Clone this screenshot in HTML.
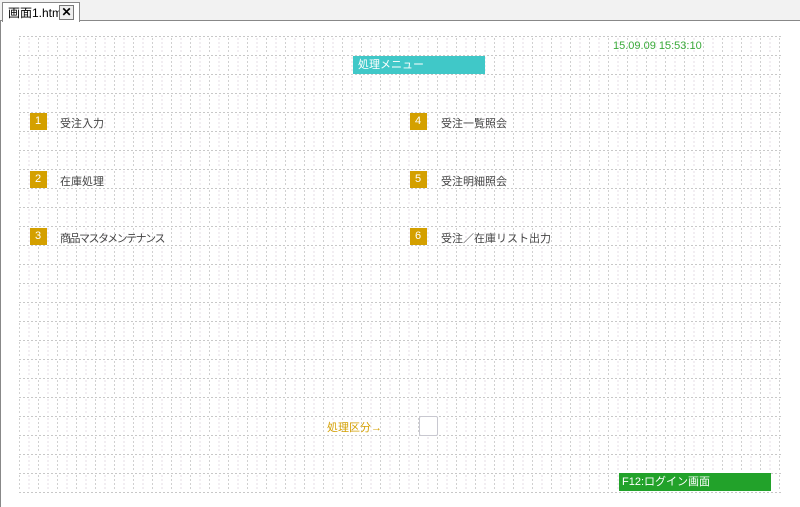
<!DOCTYPE html>
<html><head><meta charset="utf-8"><style>
body{margin:0;width:800px;height:507px;overflow:hidden;background:#fff;font-family:"Liberation Sans","Noto Sans CJK JP",sans-serif;position:relative}
.a{position:absolute}
.t{font-size:11px;color:#444;white-space:nowrap}
.b{position:absolute;width:17px;height:17px;background:#d4a000;color:#fff;font-size:11px;line-height:17px;text-indent:5px}
</style></head><body>
<div class="a" style="left:0;top:0;width:800px;height:20px;background:#f2f2f2;border-bottom:1px solid #888"></div>
<div class="a" style="left:2px;top:2px;width:76px;height:19px;background:#fff;border:1px solid #888;border-bottom:none"></div>
<div class="a t" style="left:8px;top:4px;font-size:12px;color:#000">画面1.htm</div>
<div class="a" style="left:59px;top:5px;width:13px;height:13px;border:1px solid #777;background:#eee;font-size:12px;line-height:13px;text-align:center;font-weight:bold">✕</div>
<div class="a" style="left:0;top:20px;width:1px;height:487px;background:#888"></div>
<svg class="a" style="left:0;top:0" width="800" height="507">
<defs><pattern id="p" x="19" y="36" width="19" height="19" patternUnits="userSpaceOnUse">
<path d="M0.5 2V4M0.5 6V8M0.5 10V12M0.5 14V16" stroke="#d0d0d0"/>
<path d="M10 2V4M10 6V8M10 10V12M10 14V16" stroke="#e6dce6"/>
</pattern></defs>
<rect x="19" y="36" width="762" height="457" fill="url(#p)"/>
<g stroke="#c8c8c8" stroke-width="1" stroke-dasharray="2,2">
<path d="M19 36.5H781M19 55.5H781M19 74.5H781M19 93.5H781M19 112.5H781M19 131.5H781M19 150.5H781M19 169.5H781M19 188.5H781M19 207.5H781M19 226.5H781M19 245.5H781M19 264.5H781M19 283.5H781M19 302.5H781M19 321.5H781M19 340.5H781M19 359.5H781M19 378.5H781M19 397.5H781M19 416.5H781M19 435.5H781M19 454.5H781M19 473.5H781M19 492.5H781"/>
</g>
</svg>
<div class="a" style="left:353px;top:56px;width:132px;height:18px;background:#40c8c8;color:#fff;font-size:11px;line-height:18px;text-indent:5px">処理メニュー</div>
<div class="a t" style="left:613px;top:40px;color:#3aaa3a">15.09.09 15:53:10</div>
<div class="b" style="left:30px;top:113px">1</div><div class="a t" style="left:60px;top:115px">受注入力</div>
<div class="b" style="left:30px;top:171px">2</div><div class="a t" style="left:60px;top:173px">在庫処理</div>
<div class="b" style="left:30px;top:228px">3</div><div class="a t" style="left:60px;top:230px;letter-spacing:-1.5px">商品マスタメンテナンス</div>
<div class="b" style="left:410px;top:113px">4</div><div class="a t" style="left:441px;top:115px">受注一覧照会</div>
<div class="b" style="left:410px;top:171px">5</div><div class="a t" style="left:441px;top:173px">受注明細照会</div>
<div class="b" style="left:410px;top:228px">6</div><div class="a t" style="left:441px;top:230px">受注／在庫リスト出力</div>
<div class="a t" style="left:327px;top:419px;color:#d4a000">処理区分→</div>
<div class="a" style="left:419px;top:416px;width:17px;height:18px;border:1px solid #c8c8d0;background:#fff;border-radius:2px"></div>
<div class="a" style="left:619px;top:473px;width:152px;height:18px;background:#22a22a;color:#fff;font-size:11px;line-height:18px;text-indent:3px">F12:ログイン画面</div>
</body></html>
